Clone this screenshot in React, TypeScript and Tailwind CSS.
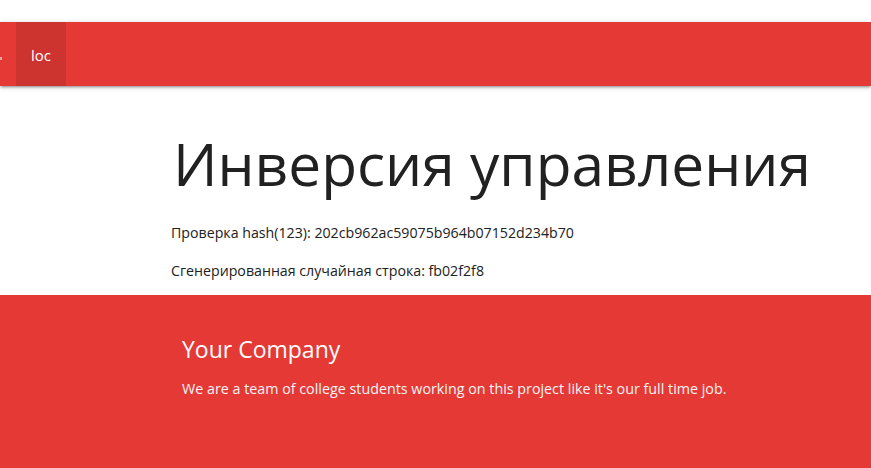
import React from 'react';

const font = { fontFamily: '"Open Sans", "Noto Sans", sans-serif' };

const NavBar: React.FC = () => (
  <nav className="relative h-[64px] bg-[#e53935] shadow-[0_2px_2px_0_rgba(0,0,0,0.14),0_3px_1px_-2px_rgba(0,0,0,0.12),0_1px_5px_0_rgba(0,0,0,0.2)]">
    {/* brand text pushed off the left edge, only its tail shows */}
    <span className="absolute left-0 top-[35px] h-[3px] w-[2px] bg-[#f3a3a1]" />
    <ul className="flex h-full pl-[16px]">
      <li className="flex h-full items-center bg-black/10 px-[15px] pt-[2px] text-[15px] text-white">loc</li>
    </ul>
  </nav>
);

export default function App() {
  return (
    <div className="flex min-h-screen flex-col bg-white" style={font}>
      <div className="h-[22px]" />
      <NavBar />
      <main className="pl-[171px] pb-[13px] text-[#212121]">
        <h1 className="mt-[45px] ml-[2px] text-[58.6px] leading-[1.1] font-normal">Инверсия управления</h1>
        <p className="mt-[27px] text-[14.2px] leading-[22.5px]">Проверка hash(123): 202cb962ac59075b964b07152d234b70</p>
        <p className="mt-[15px] text-[14.2px] leading-[22.5px]">Сгенерированная случайная строка: fb02f2f8</p>
      </main>
      <footer className="flex-1 bg-[#e53935] pl-[182px] pt-[42px]">
        <h5 className="text-[23px] leading-[1.1] text-white">Your Company</h5>
        <p className="mt-[15px] text-[14.3px] leading-[22.5px] text-[#f5f5f5]">
          We are a team of college students working on this project like it's our full time job.
        </p>
      </footer>
    </div>
  );
}
